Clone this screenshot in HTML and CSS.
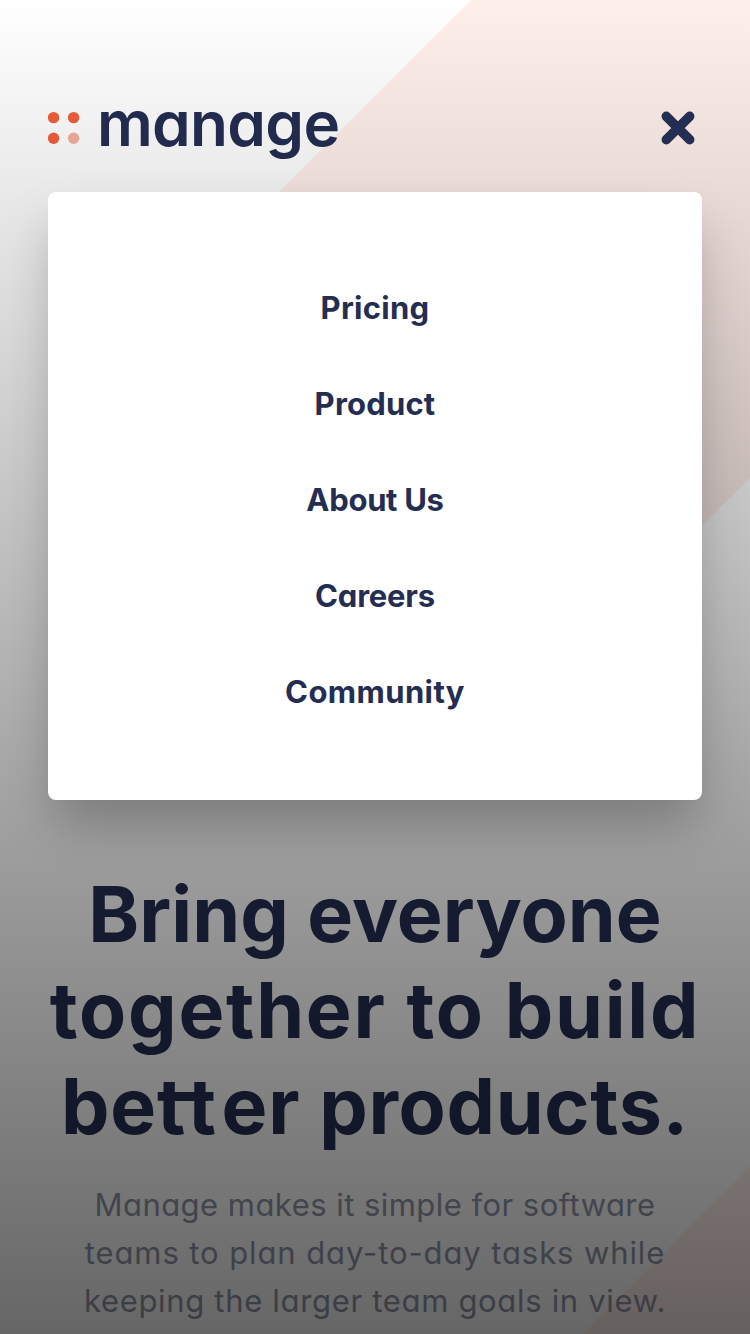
FILE: index.html
```html
<!DOCTYPE html>
<html lang="en">
<head>
<meta charset="utf-8">
<title>Manage</title>
<link rel="stylesheet" href="styles.css">
</head>
<body>
<div class="page">
  <svg class="shapes" viewBox="0 0 750 1334" aria-hidden="true">
    <path d="M471 0H750V478L520 708Q480 748 440 708L140 410Q100 371 140 331Z"/>
    <path d="M750 1167V1334H583Z"/>
  </svg>
  <div class="overlay"></div>
  <header class="header">
    <a class="logo">
      <svg class="dots" width="32" height="34" viewBox="0 0 32 34" aria-hidden="true">
        <circle cx="5.6" cy="6.6" r="5.7"/><circle cx="25.6" cy="6.6" r="5.7"/>
        <circle cx="5.6" cy="27.2" r="5.7"/><circle class="dot-light" cx="25.6" cy="27.2" r="5.7"/>
      </svg>
      <span class="wordmark">manage</span>
    </a>
    <svg class="close" width="34" height="34" viewBox="0 0 34 34" aria-label="Close menu">
      <path d="M5.3 5.3L28.7 28.7M28.7 5.3L5.3 28.7"/>
    </svg>
  </header>
  <nav class="menu">
    <a class="l1">Pricing</a>
    <a class="l2">Product</a>
    <a class="l3">About Us</a>
    <a class="l4">Careers</a>
    <a class="l5">Community</a>
  </nav>
  <main class="hero">
    <h1 class="title"><span class="t1">Bring everyone</span><span class="t2">together to build</span><span class="t3">be<span class="tt">tt</span>er products.</span></h1>
    <p class="copy"><span class="c1">Manage makes it simple for software</span><span class="c2">teams to plan day-to-day tasks while</span><span class="c3">keeping the larger team goals in view.</span></p>
  </main>
</div>
</body>
</html>
```
FILE: styles.css
```css
* { box-sizing: border-box; }
body { margin: 0; background: #fff; font-family: Inter, "Open Sans", sans-serif; font-feature-settings: "cv11" 1; color: #242d52; }
.page { position: relative; width: 750px; height: 1334px; overflow: hidden; display: flex; flex-direction: column; }
.shapes { position: absolute; inset: 0; width: 750px; height: 1334px; fill: #ffefeb; }
.overlay { position: absolute; inset: 0; z-index: 2; background: linear-gradient(rgba(0,0,0,0), rgba(0,0,0,.6)); pointer-events: none; }
.header { position: relative; height: 192px; padding: 64px 55px 0 48px; display: flex; align-items: center; justify-content: space-between; }
.logo { display: flex; align-items: center; gap: 17px; }
.dots { fill: #f3603c; }
.dot-light { fill: #f3603c; opacity: .5; }
.wordmark { font-size: 62px; font-weight: 620; line-height: 64px; letter-spacing: -.7px; padding-bottom: 9px; }
.close { position: relative; z-index: 3; fill: none; stroke: #242d52; stroke-width: 9.5; stroke-linecap: round; }
.menu { position: relative; z-index: 3; margin: 0 48px; height: 608px; padding: 92px 0; background: #fff; border-radius: 8px; box-shadow: 0 28px 50px -6px rgba(0,0,0,.25); display: flex; flex-direction: column; align-items: center; gap: 48px; font-size: 31px; font-weight: 680; line-height: 48px; }
.l1 { letter-spacing: .3px; }
.l2 { letter-spacing: .2px; }
.l3 { letter-spacing: -.3px; }
.l4 { letter-spacing: -.2px; }
.l5 { letter-spacing: .4px; }
.hero { position: relative; padding-top: 66px; text-align: center; }
.title { margin: 0; font-size: 77px; font-weight: 700; line-height: 96px; }
.title > span, .copy > span { display: block; white-space: nowrap; }
.t1 { letter-spacing: .1px; }
.t2 { letter-spacing: 1.75px; }
.t3 { letter-spacing: .7px; }
/* joined crossbar of the double t */
.tt { display: inline-block; position: relative; letter-spacing: 5.5px; }
.tt::after { content: ""; position: absolute; left: 8px; right: 14px; top: 34px; height: 9px; background: currentColor; }
.copy { margin: 27px 0 0; font-size: 31px; line-height: 48px; color: #9095a8; }
.c1 { letter-spacing: .46px; }
.c2 { letter-spacing: .9px; }
.c3 { letter-spacing: .68px; }
```
